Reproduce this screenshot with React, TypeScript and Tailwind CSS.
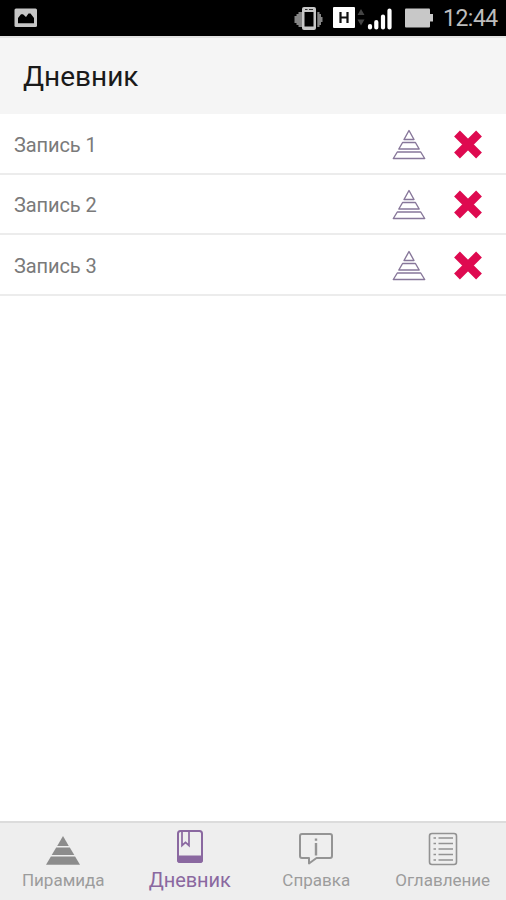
import type { ReactNode } from 'react';

type Entry = { id: number; title: string };

const entries: Entry[] = [
  { id: 1, title: 'Запись 1' },
  { id: 2, title: 'Запись 2' },
  { id: 3, title: 'Запись 3' },
];

function PictureIcon() {
  return (
    <svg width="24" height="20" viewBox="0 0 24 20">
      <rect x="0.500" y="0.500" width="22.500" height="18.500" rx="1.500" fill="#c6c6c6" />
      <path d="M4 15.300V10L7 6.200H9L12 9L14.500 5.500H16.500L20 10V15.300Z" fill="#000" />
    </svg>
  );
}

function VibrateIcon() {
  return (
    <svg width="30" height="26" viewBox="0 0 30 26">
      <path d="M0.500 10h2V8h2V6h4v15h-4v-2h-2v-2h-2z" fill="#858585" />
      <path d="M28.500 11h-1.500V8h-1.500V6H23.300v15h2.200v-2H27v-3h1.500z" fill="#858585" />
      <rect x="8" y="1" width="14" height="23" rx="2" fill="#c8c8c8" />
      <rect x="10.500" y="6" width="9" height="14.500" fill="#000" />
      <path d="M11 3.500h2.500M15 3.500h4" stroke="#333" strokeWidth="1.200" />
    </svg>
  );
}

function DataIcon() {
  return (
    <svg width="33" height="24" viewBox="0 0 33 24">
      <rect x="0" y="1" width="22" height="21" rx="1" fill="#fff" />
      <path d="M7.500 6v11M14.500 6v11M7.500 11.500h7" stroke="#111" strokeWidth="2.200" fill="none" />
      <path d="M24.500 9L28 3l3.500 6zM24.500 13.500L28 19.500l3.500-6z" fill="#444" />
    </svg>
  );
}

function SignalIcon() {
  return (
    <svg width="26" height="22" viewBox="0 0 26 22">
      <path d="M3 18v1.500M9.300 14v5.500M16 8.500v11M22.500 2.500v17" stroke="#fff" strokeWidth="4.200" strokeLinecap="round" />
    </svg>
  );
}

function BatteryIcon() {
  return (
    <svg width="28" height="20" viewBox="0 0 28 20">
      <rect x="0" y="0.500" width="25" height="19" rx="1" fill="#c8c8c8" />
      <rect x="24" y="6" width="4" height="7.500" fill="#c8c8c8" />
    </svg>
  );
}

function StatusBar() {
  return (
    <div className="flex h-9 items-center bg-black">
      <div className="ml-[14px]">
        <PictureIcon />
      </div>
      <div className="ml-auto flex items-center pr-[8px]">
        <div className="mt-px">
          <VibrateIcon />
        </div>
        <div className="ml-[9px]">
          <DataIcon />
        </div>
        <div className="ml-[1px] mt-[2px]">
          <SignalIcon />
        </div>
        <div className="ml-[12px]">
          <BatteryIcon />
        </div>
        <span className="ml-[10px] w-[55px] whitespace-nowrap pt-px text-[23px] leading-9 tracking-[-0.5px] text-[#bdbdbd]">12:44</span>
      </div>
    </div>
  );
}

function OutlinePyramid() {
  return (
    <svg width="34" height="32" viewBox="0 0 34 32" fill="none" stroke="#87779a" strokeWidth="1.400" strokeLinejoin="round">
      <path d="M17 1.500L22 10.500H12z" />
      <path d="M10.600 13.500h12.800l3.800 6.500H6.800z" />
      <path d="M5.300 23h23.400l4 6.500H1.300z" />
    </svg>
  );
}

function DeleteIcon() {
  return (
    <svg width="30" height="30" viewBox="0 0 30 30" fill="none" stroke="#de0a50" strokeWidth="8.200" strokeLinejoin="round">
      <path d="M4 3.500L26 25.500M26 3.500L4 25.500" />
    </svg>
  );
}

function EntryRow({ entry }: { entry: Entry }) {
  return (
    <li className="flex h-[60.600px] items-center border-b-2 border-[#ececec] pl-[14px] pt-[3px]">
      <span className="text-[20px] tracking-[-0.1px] text-[#7a7a7a]">{entry.title}</span>
      <button className="ml-auto" aria-label="Пирамида">
        <OutlinePyramid />
      </button>
      <button className="ml-[27px] mr-[23px]" aria-label="Удалить">
        <DeleteIcon />
      </button>
    </li>
  );
}

function PyramidIcon() {
  return (
    <svg width="34" height="30" viewBox="0 0 34 30" fill="#8c8c8c">
      <path d="M17 0L22.800 10H11.200z" />
      <path d="M10.200 11.600h13.600l4.500 7.400H5.700z" />
      <path d="M4.900 20.600h24.200L34 28.700H0z" />
    </svg>
  );
}

function BookIcon() {
  return (
    <svg width="28" height="36" viewBox="0 0 28 36" fill="none" stroke="#8a68a0" strokeWidth="2">
      <rect x="2" y="2" width="24" height="31" rx="2.500" />
      <path d="M2 27.500h24V31q0 2-2 2H4q-2 0-2-2z" fill="#8a68a0" />
      <path d="M6 2v14.500l3.500-3.200 3.500 3.200V2" strokeWidth="1.700" />
    </svg>
  );
}

function HelpIcon() {
  return (
    <svg width="34" height="34" viewBox="0 0 34 34" fill="none" stroke="#949494" strokeWidth="2">
      <path d="M3 2h28q2 0 2 2v20q0 2-2 2H17.500L10 31.500V26H3q-2 0-2-2V4q0-2 2-2z" strokeLinejoin="round" />
      <path d="M17 11v12.500M17 6.500v2.200" strokeWidth="2.400" />
    </svg>
  );
}

function ContentsIcon() {
  return (
    <svg width="30" height="34" viewBox="0 0 30 34" fill="none" stroke="#929292">
      <rect x="1.500" y="1.500" width="27" height="31" rx="2.500" strokeWidth="1.600" />
      <path d="M5.500 6h2.500M5.500 11.500h2.500M5.500 17h2.500M5.500 22.500h2.500M5.500 28h2.500M10.500 6H25M10.500 11.500H25M10.500 17H25M10.500 22.500H25M10.500 28H25" strokeWidth="1.700" />
    </svg>
  );
}

function Tab({ label, icon, active = false }: { label: string; icon: ReactNode; active?: boolean }) {
  return (
    <button className="flex flex-1 flex-col items-center">
      <span className={`flex h-[45px] items-end ${active ? 'pb-[3px]' : 'pb-[2px]'}`}>{icon}</span>
      <span
        className={
          active
            ? 'whitespace-nowrap text-[20px] leading-[24px] tracking-[-0.1px] text-[#8a68a0]'
            : 'whitespace-nowrap text-[17px] leading-[25px] text-[#9c9c9c]'
        }
      >
        {label}
      </span>
    </button>
  );
}

export default function App() {
  return (
    <div className="flex h-[900px] w-[506px] flex-col overflow-hidden bg-white font-[Roboto,'Noto_Sans',sans-serif]">
      <StatusBar />
      <header className="flex h-[78px] items-center border-t-2 border-[#e3e3e3] bg-[#f5f5f5] pl-[23px]">
        <h1 className="pt-[2px] text-[28px] text-[#1a1a1a]">Дневник</h1>
      </header>
      <ul className="flex-1">
        {entries.map((entry) => (
          <EntryRow key={entry.id} entry={entry} />
        ))}
      </ul>
      <nav className="grid h-[79px] grid-cols-4 border-t-2 border-[#dcdcdc] bg-[#eeeeee]">
        <Tab label="Пирамида" icon={<PyramidIcon />} />
        <Tab label="Дневник" icon={<BookIcon />} active />
        <Tab label="Справка" icon={<HelpIcon />} />
        <Tab label="Оглавление" icon={<ContentsIcon />} />
      </nav>
    </div>
  );
}
